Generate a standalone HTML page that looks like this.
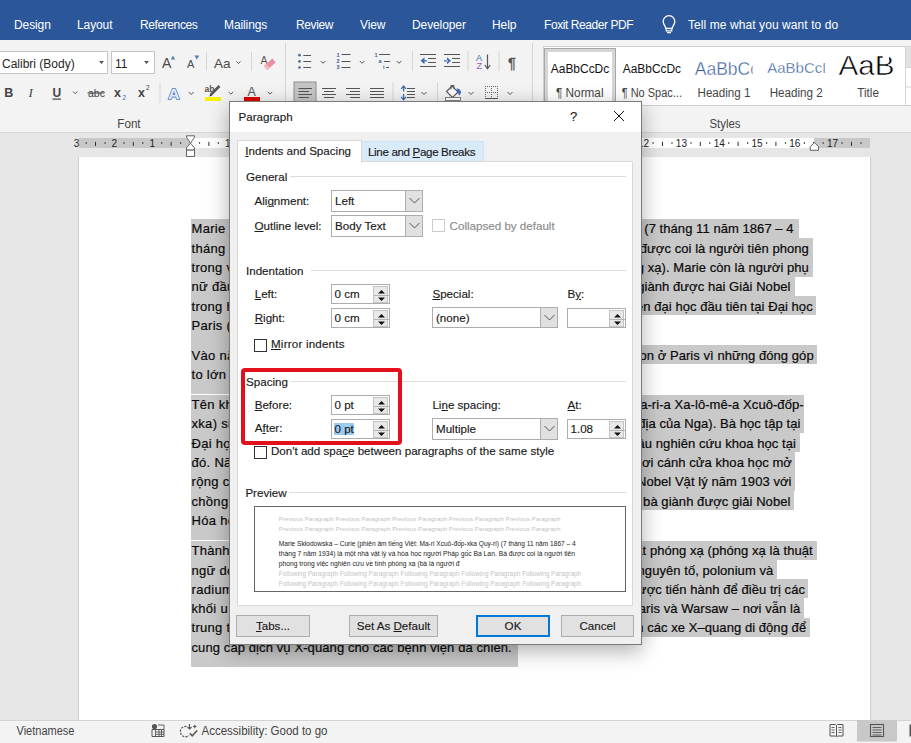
<!DOCTYPE html>
<html><head><meta charset="utf-8">
<style>
*{margin:0;padding:0;box-sizing:border-box}
html,body{width:911px;height:743px;overflow:hidden;background:#e6e6e6}
body{position:relative;font-family:"Liberation Sans",sans-serif;font-size:12px;color:#262626}
.a{position:absolute;white-space:nowrap}
#tabs{left:0;top:0;width:911px;height:40px;background:#2b579a}
#tabs .t{position:absolute;top:18.4px;color:#fff;font-size:12px;line-height:14px;letter-spacing:-0.1px}
#ribbon{left:0;top:40px;width:911px;height:93px;background:#f3f3f3;border-bottom:1px solid #d6d6d6}
.sep{position:absolute;width:1px;background:#d4d4d4}
.gsep{position:absolute;width:1px;background:#dadada}
.box{position:absolute;background:#fff;border:1px solid #c6c6c6}
.glab{position:absolute;top:77px;font-size:12px;color:#444;line-height:14px}
#page{left:79px;top:156.5px;width:791px;height:564px;background:#fff;box-shadow:-1px 0 0 #d0d0d0,1px 0 0 #d0d0d0}
#status{left:0;top:720px;width:911px;height:23px;background:#f3f3f3;border-top:1px solid #d4d4d4}
.hl{position:absolute;background:#c9c9c9}
.ptx{position:absolute;font-size:13px;color:#0a0a0a;-webkit-text-stroke:0.2px #0a0a0a;line-height:16px;white-space:nowrap;letter-spacing:0.06px}
#dlg{z-index:10;left:229px;top:101px;width:413px;height:544px;background:#f0f0f0;border:1px solid #7a7a7a;box-shadow:0 6px 20px rgba(0,0,0,0.32)}
.d{position:absolute;white-space:nowrap;font-size:11.6px;line-height:14px;color:#1a1a1a;letter-spacing:0px;-webkit-text-stroke:0.15px currentColor}
.u{text-decoration:underline;text-underline-offset:1px}
.combo{position:absolute;background:#fff;border:1px solid #adadad;height:21px}
.combo .btn{position:absolute;right:0;top:0;width:17px;height:19px;background:#e1e1e1;border-left:1px solid #adadad}
.spin{position:absolute;background:#fff;border:1px solid #adadad;height:20px}
.spin .sb{position:absolute;right:1px;top:1px;width:15px;height:16px;background:#e8e8e8;border:1px solid #c4c4c4}
.chk{position:absolute;width:13px;height:13px;background:#fff;border:1px solid #333}
.sect{position:absolute;height:1px;background:#dcdcdc}
.btnw{position:absolute;height:22px;background:#e1e1e1;border:1px solid #adadad;text-align:center;font-size:11.6px;line-height:20px;color:#1a1a1a;-webkit-text-stroke:0.15px #1a1a1a}
</style></head><body>

<!-- Tabs bar -->
<div id="tabs" class="a">
  <span class="t" style="left:14px">Design</span>
  <span class="t" style="left:77px">Layout</span>
  <span class="t" style="left:140px;letter-spacing:-0.4px">References</span>
  <span class="t" style="left:224px">Mailings</span>
  <span class="t" style="left:296px;letter-spacing:-0.4px">Review</span>
  <span class="t" style="left:360px">View</span>
  <span class="t" style="left:412px">Developer</span>
  <span class="t" style="left:492px">Help</span>
  <span class="t" style="left:544px;letter-spacing:-0.43px">Foxit Reader PDF</span>
  <span class="t" style="left:688px;letter-spacing:0.08px">Tell me what you want to do</span>
  <svg class="a" style="left:660px;top:14px" width="18" height="22"><path d="M5.8 14.3 C5.8 12.2 3.2 10.6 3.2 7.5 A5.8 5.8 0 0 1 14.8 7.5 C14.8 10.6 12.2 12.2 12.2 14.3 Z" fill="none" stroke="#fff" stroke-width="1.3"/><path d="M6.2 14.5 H11.8 V16.8 H6.2 Z" fill="none" stroke="#fff" stroke-width="1.2"/><path d="M7 18.6 H11" stroke="#fff" stroke-width="1.3"/></svg>
</div>

<!-- Ribbon -->
<div id="ribbon" class="a"></div>
<svg class="a" style="left:0;top:0" width="911" height="133" font-family="Liberation Sans">
 <!-- font name/size boxes -->
 <rect x="-1.5" y="51.5" width="109" height="22" fill="#fff" stroke="#c6c6c6"/>
 <rect x="111.5" y="51.5" width="43" height="22" fill="#fff" stroke="#c6c6c6"/>
 <text x="2" y="68" font-size="12" fill="#262626">Calibri (Body)</text>
 <text x="115" y="68" font-size="12" fill="#262626">11</text>
 <path d="M99 61 L104 61 L101.5 64 Z M144 61 L149 61 L146.5 64 Z" fill="#555"/>
 <!-- grow/shrink -->
 <text x="162" y="68" font-size="14" fill="#4a4a4a">A</text>
 <path d="M170.8 59.5 L173 55.5 L175.2 59.5 Z" fill="#5a7fb5"/>
 <text x="187" y="68" font-size="11" fill="#4a4a4a">A</text>
 <path d="M194.3 55.5 L199.3 55.5 L196.8 59.5 Z" fill="#5a7fb5"/>
 <rect x="206" y="52" width="1" height="19" fill="#d6d6d6"/>
 <text x="214" y="68" font-size="13.5" fill="#4a4a4a">Aa</text>
 <path d="M236.5 61.5 L238.5 63.5 L240.5 61.5" fill="none" stroke="#555"/>
 <rect x="251" y="52" width="1" height="19" fill="#d6d6d6"/>
 <text x="260.5" y="63.5" font-size="10.5" fill="#555">A</text>
 <path d="M263.85 66.1 L272.35 58.6 L275.65 62.4 L267.15 69.9 Z" fill="#ea8fa2"/>
 <path d="M263.85 66.1 L266.4 63.9 L269.7 67.6 L267.15 69.9 Z" fill="#f2b6c2"/>
 <!-- row 2 -->
 <text x="4.3" y="97" font-size="12.5" font-weight="bold" fill="#444">B</text>
 <text x="28.5" y="97" font-size="13" font-style="italic" font-family="Liberation Serif" fill="#444">I</text>
 <text x="52.5" y="97" font-size="12" fill="#444" font-weight="bold">U</text>
 <rect x="52.5" y="98.5" width="8.5" height="1.2" fill="#444"/>
 <path d="M73 91.5 L75.2 93.7 L77.4 91.5" fill="none" stroke="#555"/>
 <text x="88" y="97" font-size="10.5" fill="#444">abc</text>
 <rect x="87.5" y="92.5" width="17" height="1" fill="#444"/>
 <text x="114" y="97" font-size="12.5" font-weight="bold" fill="#444">x</text>
 <text x="122.5" y="99.5" font-size="6.5" fill="#3b6bb0">2</text>
 <text x="138" y="97" font-size="12.5" font-weight="bold" fill="#444">x</text>
 <text x="146" y="90" font-size="6.5" fill="#444">2</text>
 <rect x="159.5" y="83" width="1" height="20" fill="#d6d6d6"/>
 <text x="168.3" y="98.8" font-size="15.5" font-weight="bold" fill="#3f6fb8" stroke="#4f7fc4" stroke-width="1.6">A</text><text x="168.3" y="98.8" font-size="15.5" font-weight="bold" fill="#e6eef9">A</text>
 <path d="M188.7 92 L191.2 94.5 L193.7 92" fill="none" stroke="#555"/>
 <text x="204.5" y="92" font-size="8.5" font-weight="bold" fill="#555">ab</text>
 <path d="M210.5 95 L219.5 86" stroke="#555" stroke-width="2.6"/>
 <path d="M209 96.5 L210.5 94.5 L211.8 95.8 Z" fill="#333"/>
 <rect x="205" y="97" width="16" height="4" fill="#f5f500"/>
 <path d="M228.7 92 L230.9 94.2 L233.1 92" fill="none" stroke="#555"/>
 <text x="247.5" y="96" font-size="12.5" fill="#555">A</text>
 <rect x="244" y="97" width="16" height="4" fill="#e00000"/>
 <path d="M267.8 92 L270 94.2 L272.2 92" fill="none" stroke="#555"/>
 <!-- group labels/separators -->
 <text x="117.3" y="128.3" font-size="12" fill="#444" textLength="23.3" lengthAdjust="spacingAndGlyphs">Font</text>
 <text x="709.5" y="128.3" font-size="12" fill="#444" textLength="31" lengthAdjust="spacingAndGlyphs">Styles</text>
 <rect x="285" y="43" width="1" height="86" fill="#d4d4d4"/>
 <rect x="532" y="43" width="1" height="86" fill="#d4d4d4"/>
 <!-- paragraph row1 -->
 <g fill="#4d6a96"><circle cx="299.5" cy="55.2" r="1.35"/><circle cx="299.5" cy="61.4" r="1.35"/><circle cx="299.5" cy="67.5" r="1.35"/></g>
 <g fill="#555"><rect x="303.3" y="55" width="7.8" height="1"/><rect x="303.3" y="61" width="7.8" height="1"/><rect x="303.3" y="67" width="7.8" height="1"/></g>
 <path d="M320.8 61 L323.1 63.3 L325.4 61" fill="none" stroke="#555"/>
 <g font-size="5.5" fill="#3d5f95" font-weight="bold"><text x="336.5" y="57">1</text><text x="336.5" y="63.3">2</text><text x="336.5" y="69.4">3</text></g>
 <g fill="#555"><rect x="341.5" y="54" width="9" height="1"/><rect x="341.5" y="61" width="9" height="1"/><rect x="341.5" y="67" width="9" height="1"/></g>
 <path d="M359.8 61 L362.1 63.3 L364.4 61" fill="none" stroke="#555"/>
 <g font-size="5.5" fill="#3d5f95" font-weight="bold"><text x="374.5" y="57">1</text><text x="378.5" y="63.3">a</text><text x="383" y="69.4">i</text></g>
 <g fill="#555"><rect x="379" y="54" width="11" height="1"/><rect x="384" y="61" width="6" height="1"/><rect x="386" y="67" width="3" height="1"/></g>
 <path d="M396.8 61 L399.1 63.3 L401.4 61" fill="none" stroke="#555"/>
 <rect x="412" y="51" width="1" height="20" fill="#d6d6d6"/>
 <g fill="#555"><rect x="420" y="54" width="16" height="1"/><rect x="428" y="58" width="8" height="1"/><rect x="428" y="62" width="8" height="1"/><rect x="420" y="66" width="16" height="1"/>
 <rect x="444" y="54" width="16" height="1"/><rect x="452" y="58" width="8" height="1"/><rect x="452" y="62" width="8" height="1"/><rect x="444" y="66" width="16" height="1"/></g>
 <path d="M420.5 60.8 L424.5 57.3 L424.5 64.3 Z M423 60.2 L427 60.2 L427 61.4 L423 61.4 Z" fill="#3e6db5"/>
 <path d="M451 60.8 L447 57.3 L447 64.3 Z M444 60.2 L448 60.2 L448 61.4 L444 61.4 Z" fill="#3e6db5"/>
 <rect x="467.5" y="51" width="1" height="20" fill="#d6d6d6"/>
 <text x="476" y="61.3" font-size="9.2" fill="#3e6db5">A</text>
 <text x="476.5" y="69" font-size="9.2" fill="#8c6bb1">Z</text>
 <path d="M487.5 54.5 L487.5 68" stroke="#555" stroke-width="1.2"/><path d="M484.8 65 L487.5 68.8 L490.2 65" fill="none" stroke="#555" stroke-width="1.2"/>
 <rect x="498.5" y="51" width="1" height="20" fill="#d6d6d6"/>
 <text x="508" y="68" font-size="14.5" fill="#555" stroke="#555" stroke-width="0.3">¶</text>
 <!-- paragraph row2 -->
 <rect x="294" y="82" width="22" height="22" fill="#c5c5c5" stroke="#8d8d8d"/>
 <g fill="#555">
  <rect x="298.5" y="88" width="13.5" height="1"/><rect x="298.5" y="91" width="10.5" height="1"/><rect x="298.5" y="94" width="13.5" height="1"/><rect x="298.5" y="97" width="10.5" height="1"/>
  <rect x="322" y="88" width="14" height="1"/><rect x="324" y="91" width="10" height="1"/><rect x="322" y="94" width="14" height="1"/><rect x="324" y="97" width="10" height="1"/>
  <rect x="346" y="88" width="14" height="1"/><rect x="350" y="91" width="10" height="1"/><rect x="346" y="94" width="14" height="1"/><rect x="350" y="97" width="10" height="1"/>
  <rect x="370" y="88" width="14" height="1"/><rect x="370" y="91" width="14" height="1"/><rect x="370" y="94" width="14" height="1"/><rect x="370" y="97" width="14" height="1"/>
 </g>
 <rect x="392.5" y="82" width="1" height="20" fill="#d6d6d6"/>
 <path d="M403.6 86.5 V91.5 M403.6 94 V99.3" stroke="#3e6db5" stroke-width="1.3"/>
 <path d="M401.2 88.8 L403.6 86 L406 88.8 M401.2 97 L403.6 99.8 L406 97" fill="none" stroke="#3e6db5" stroke-width="1.3"/>
 <g fill="#555"><rect x="407" y="88" width="8" height="1"/><rect x="407" y="91" width="8" height="1"/><rect x="407" y="94" width="8" height="1"/><rect x="407" y="97" width="8" height="1"/></g>
 <path d="M421.5 92 L424 94.5 L426.5 92" fill="none" stroke="#555"/>
 <rect x="437" y="82" width="1" height="20" fill="#d6d6d6"/>
 <path d="M446.5 91.5 L452 86 L458 92 L452.5 97.5 Z" fill="#fff" stroke="#555" stroke-width="1.1"/>
 <path d="M451 89.5 V85.5 H454 V89" fill="none" stroke="#555" stroke-width="1"/>
 <path d="M456.5 88.5 C459.5 88.5 461 90.5 461 92.5 L459.5 95.5 L457 92 Z" fill="#3e6db5"/>
 <rect x="445.5" y="97.5" width="15" height="3" fill="#fff" stroke="#777" stroke-width="0.9"/>
 <path d="M468.5 92 L471 94.5 L473.5 92" fill="none" stroke="#555"/>
 <path d="M485 86h1v1h-1zM485 88h1v1h-1zM485 90h1v1h-1zM485 92h1v1h-1zM485 94h1v1h-1zM485 96h1v1h-1zM487 86h1v1h-1zM487 92h1v1h-1zM489 86h1v1h-1zM489 92h1v1h-1zM491 86h1v1h-1zM491 88h1v1h-1zM491 90h1v1h-1zM491 92h1v1h-1zM491 94h1v1h-1zM491 96h1v1h-1zM493 86h1v1h-1zM493 92h1v1h-1zM495 86h1v1h-1zM495 92h1v1h-1zM497 86h1v1h-1zM497 88h1v1h-1zM497 90h1v1h-1zM497 92h1v1h-1zM497 94h1v1h-1zM497 96h1v1h-1z" fill="#666"/>
 <rect x="485" y="98" width="13" height="1" fill="#555"/>
 <path d="M507.5 92 L510 94.5 L512.5 92" fill="none" stroke="#555"/>
 <!-- styles gallery -->
 <rect x="543.5" y="46.5" width="368" height="59" fill="#fff" stroke="#cfcfcf"/>
 <rect x="544" y="48" width="72" height="58" fill="#a8a8a8"/><rect x="545" y="49" width="70" height="57" fill="#d6d6d6"/><rect x="548" y="52" width="64" height="54" fill="#fff"/>
 <text x="550.8" y="73" font-size="12" fill="#111" textLength="58.4" lengthAdjust="spacingAndGlyphs">AaBbCcDc</text>
 <text x="556" y="97" font-size="12" fill="#444" textLength="47.5" lengthAdjust="spacingAndGlyphs">¶ Normal</text>
 <text x="622.8" y="73" font-size="12" fill="#111" textLength="58.2" lengthAdjust="spacingAndGlyphs">AaBbCcDc</text>
 <text x="621.7" y="97" font-size="12" fill="#444" textLength="60.3" lengthAdjust="spacingAndGlyphs">¶ No Spac...</text>
 <svg x="690" y="48" width="62.5" height="40"><text x="4.8" y="27" font-size="17.5" fill="#3b5f9e" stroke="#fff" stroke-width="0.35">AaBbCc</text></svg>
 <text x="697.5" y="97" font-size="12" fill="#444" textLength="53" lengthAdjust="spacingAndGlyphs">Heading 1</text>
 <svg x="760" y="48" width="64.8" height="40"><text x="7.2" y="25.1" font-size="15" fill="#3b5f9e" stroke="#fff" stroke-width="0.3">AaBbCcDd</text></svg>
 <text x="769.7" y="97" font-size="12" fill="#444" textLength="53" lengthAdjust="spacingAndGlyphs">Heading 2</text>
 <text x="838.5" y="74.8" font-size="28" fill="#000" stroke="#fff" stroke-width="0.55" textLength="56" lengthAdjust="spacingAndGlyphs">AaB</text><rect x="882.6" y="53" width="6.5" height="7.6" fill="#fff"/>
 <text x="857.3" y="97" font-size="12" fill="#444" textLength="21.7" lengthAdjust="spacingAndGlyphs">Title</text>
 <rect x="905" y="46.5" width="6" height="21" fill="#e1e1e1"/>
 <rect x="905" y="46.5" width="1" height="59" fill="#d5d5d5"/>
 <rect x="905" y="86.5" width="6" height="1" fill="#d5d5d5"/>
 <rect x="905" y="67" width="6" height="1" fill="#d5d5d5"/>
</svg>
<!-- ruler -->
<svg class="a" style="left:0;top:133px;z-index:2" width="911" height="24" font-family="Liberation Sans">
 <rect x="79" y="5" width="791" height="10" fill="#fff"/>
 <rect x="79" y="5" width="111" height="10" fill="#c8c8c8"/>
 <rect x="814" y="5" width="56" height="10" fill="#c8c8c8"/>
 <text x="76.6" y="13.6" font-size="10" fill="#222" text-anchor="middle">3</text>
 <rect x="85.6" y="9.3" width="1.2" height="1.4" fill="#222"/>
 <rect x="95.0" y="8.8" width="1" height="4.2" fill="#333"/>
 <rect x="104.5" y="9.3" width="1.2" height="1.4" fill="#222"/>
 <text x="114.4" y="13.6" font-size="10" fill="#222" text-anchor="middle">2</text>
 <rect x="123.4" y="9.3" width="1.2" height="1.4" fill="#222"/>
 <rect x="132.8" y="8.8" width="1" height="4.2" fill="#333"/>
 <rect x="142.2" y="9.3" width="1.2" height="1.4" fill="#222"/>
 <text x="152.2" y="13.6" font-size="10" fill="#222" text-anchor="middle">1</text>
 <rect x="161.1" y="9.3" width="1.2" height="1.4" fill="#222"/>
 <rect x="170.6" y="8.8" width="1" height="4.2" fill="#333"/>
 <rect x="180.0" y="9.3" width="1.2" height="1.4" fill="#222"/>
 <rect x="198.9" y="9.3" width="1.2" height="1.4" fill="#222"/>
 <rect x="208.4" y="8.8" width="1" height="4.2" fill="#333"/>
 <rect x="217.8" y="9.3" width="1.2" height="1.4" fill="#222"/>
 <text x="227.8" y="13.6" font-size="10" fill="#222" text-anchor="middle">1</text>
 <rect x="236.8" y="9.3" width="1.2" height="1.4" fill="#222"/>
 <rect x="246.2" y="8.8" width="1" height="4.2" fill="#333"/>
 <rect x="255.7" y="9.3" width="1.2" height="1.4" fill="#222"/>
 <text x="265.6" y="13.6" font-size="10" fill="#222" text-anchor="middle">2</text>
 <rect x="274.6" y="9.3" width="1.2" height="1.4" fill="#222"/>
 <rect x="284.0" y="8.8" width="1" height="4.2" fill="#333"/>
 <rect x="293.5" y="9.3" width="1.2" height="1.4" fill="#222"/>
 <text x="303.4" y="13.6" font-size="10" fill="#222" text-anchor="middle">3</text>
 <rect x="312.3" y="9.3" width="1.2" height="1.4" fill="#222"/>
 <rect x="321.8" y="8.8" width="1" height="4.2" fill="#333"/>
 <rect x="331.2" y="9.3" width="1.2" height="1.4" fill="#222"/>
 <text x="341.2" y="13.6" font-size="10" fill="#222" text-anchor="middle">4</text>
 <rect x="350.1" y="9.3" width="1.2" height="1.4" fill="#222"/>
 <rect x="359.6" y="8.8" width="1" height="4.2" fill="#333"/>
 <rect x="369.1" y="9.3" width="1.2" height="1.4" fill="#222"/>
 <text x="379.0" y="13.6" font-size="10" fill="#222" text-anchor="middle">5</text>
 <rect x="387.9" y="9.3" width="1.2" height="1.4" fill="#222"/>
 <rect x="397.4" y="8.8" width="1" height="4.2" fill="#333"/>
 <rect x="406.9" y="9.3" width="1.2" height="1.4" fill="#222"/>
 <text x="416.8" y="13.6" font-size="10" fill="#222" text-anchor="middle">6</text>
 <rect x="425.7" y="9.3" width="1.2" height="1.4" fill="#222"/>
 <rect x="435.2" y="8.8" width="1" height="4.2" fill="#333"/>
 <rect x="444.6" y="9.3" width="1.2" height="1.4" fill="#222"/>
 <text x="454.6" y="13.6" font-size="10" fill="#222" text-anchor="middle">7</text>
 <rect x="463.5" y="9.3" width="1.2" height="1.4" fill="#222"/>
 <rect x="473.0" y="8.8" width="1" height="4.2" fill="#333"/>
 <rect x="482.4" y="9.3" width="1.2" height="1.4" fill="#222"/>
 <text x="492.4" y="13.6" font-size="10" fill="#222" text-anchor="middle">8</text>
 <rect x="501.3" y="9.3" width="1.2" height="1.4" fill="#222"/>
 <rect x="510.8" y="8.8" width="1" height="4.2" fill="#333"/>
 <rect x="520.2" y="9.3" width="1.2" height="1.4" fill="#222"/>
 <text x="530.2" y="13.6" font-size="10" fill="#222" text-anchor="middle">9</text>
 <rect x="539.2" y="9.3" width="1.2" height="1.4" fill="#222"/>
 <rect x="548.6" y="8.8" width="1" height="4.2" fill="#333"/>
 <rect x="558.1" y="9.3" width="1.2" height="1.4" fill="#222"/>
 <text x="568.0" y="13.6" font-size="10" fill="#222" text-anchor="middle">10</text>
 <rect x="577.0" y="9.3" width="1.2" height="1.4" fill="#222"/>
 <rect x="586.4" y="8.8" width="1" height="4.2" fill="#333"/>
 <rect x="595.9" y="9.3" width="1.2" height="1.4" fill="#222"/>
 <text x="605.8" y="13.6" font-size="10" fill="#222" text-anchor="middle">11</text>
 <rect x="614.8" y="9.3" width="1.2" height="1.4" fill="#222"/>
 <rect x="624.2" y="8.8" width="1" height="4.2" fill="#333"/>
 <rect x="633.6" y="9.3" width="1.2" height="1.4" fill="#222"/>
 <text x="643.6" y="13.6" font-size="10" fill="#222" text-anchor="middle">12</text>
 <rect x="652.5" y="9.3" width="1.2" height="1.4" fill="#222"/>
 <rect x="662.0" y="8.8" width="1" height="4.2" fill="#333"/>
 <rect x="671.4" y="9.3" width="1.2" height="1.4" fill="#222"/>
 <text x="681.4" y="13.6" font-size="10" fill="#222" text-anchor="middle">13</text>
 <rect x="690.4" y="9.3" width="1.2" height="1.4" fill="#222"/>
 <rect x="699.8" y="8.8" width="1" height="4.2" fill="#333"/>
 <rect x="709.2" y="9.3" width="1.2" height="1.4" fill="#222"/>
 <text x="719.2" y="13.6" font-size="10" fill="#222" text-anchor="middle">14</text>
 <rect x="728.1" y="9.3" width="1.2" height="1.4" fill="#222"/>
 <rect x="737.6" y="8.8" width="1" height="4.2" fill="#333"/>
 <rect x="747.0" y="9.3" width="1.2" height="1.4" fill="#222"/>
 <text x="757.0" y="13.6" font-size="10" fill="#222" text-anchor="middle">15</text>
 <rect x="766.0" y="9.3" width="1.2" height="1.4" fill="#222"/>
 <rect x="775.4" y="8.8" width="1" height="4.2" fill="#333"/>
 <rect x="784.9" y="9.3" width="1.2" height="1.4" fill="#222"/>
 <text x="794.8" y="13.6" font-size="10" fill="#222" text-anchor="middle">16</text>
 <rect x="803.8" y="9.3" width="1.2" height="1.4" fill="#222"/>
 <rect x="813.2" y="8.8" width="1" height="4.2" fill="#333"/>
 <rect x="822.6" y="9.3" width="1.2" height="1.4" fill="#222"/>
 <text x="832.6" y="13.6" font-size="10" fill="#222" text-anchor="middle">17</text>
 <rect x="841.5" y="9.3" width="1.2" height="1.4" fill="#222"/>
 <rect x="851.0" y="8.8" width="1" height="4.2" fill="#333"/>
 <rect x="860.4" y="9.3" width="1.2" height="1.4" fill="#222"/>
 <path d="M186.5 2.8 H194.5 V4.2 L190.5 10.2 L186.5 4.2 Z" fill="#fff" stroke="#555" stroke-width="0.9"/>
 <path d="M190.5 10.2 L194.5 14.8 V17.1 H186.5 V14.8 Z" fill="#fff" stroke="#555" stroke-width="0.9"/>
 <rect x="186.5" y="17.1" width="8" height="6.3" fill="#fff" stroke="#555" stroke-width="0.9"/>
 <path d="M814.4 9.5 L818.5 13.6 V17.3 H810.3 V13.6 Z" fill="#fff" stroke="#555" stroke-width="0.9"/>
</svg>

<!-- page -->
<div id="page" class="a"></div>
<div class="hl" style="left:191px;top:218.80px;width:608.0px;height:19.27px"></div>
<div class="hl" style="left:191px;top:238.07px;width:621.7px;height:19.27px"></div>
<div class="hl" style="left:191px;top:257.34px;width:621.7px;height:19.27px"></div>
<div class="hl" style="left:191px;top:276.61px;width:603.5px;height:19.27px"></div>
<div class="hl" style="left:191px;top:295.88px;width:624.8px;height:19.27px"></div>
<div class="hl" style="left:191px;top:315.15px;width:369.0px;height:29.87px"></div>
<div class="hl" style="left:191px;top:345.00px;width:625.8px;height:19.27px"></div>
<div class="hl" style="left:191px;top:364.27px;width:329.0px;height:29.87px"></div>
<div class="hl" style="left:191px;top:394.50px;width:613.2px;height:19.27px"></div>
<div class="hl" style="left:191px;top:413.77px;width:613.2px;height:19.27px"></div>
<div class="hl" style="left:191px;top:433.04px;width:609.0px;height:19.27px"></div>
<div class="hl" style="left:191px;top:452.31px;width:604.3px;height:19.27px"></div>
<div class="hl" style="left:191px;top:471.58px;width:604.3px;height:19.27px"></div>
<div class="hl" style="left:191px;top:490.85px;width:603.0px;height:19.27px"></div>
<div class="hl" style="left:191px;top:510.12px;width:409.0px;height:29.87px"></div>
<div class="hl" style="left:191px;top:540.60px;width:625.7px;height:19.27px"></div>
<div class="hl" style="left:191px;top:559.87px;width:585.7px;height:19.27px"></div>
<div class="hl" style="left:191px;top:579.14px;width:616.6px;height:19.27px"></div>
<div class="hl" style="left:191px;top:598.41px;width:613.2px;height:19.27px"></div>
<div class="hl" style="left:191px;top:617.68px;width:619.3px;height:19.27px"></div>
<div class="hl" style="left:191px;top:636.95px;width:326.5px;height:29.87px"></div>
<span class="ptx" style="letter-spacing:0.3px;left:191.5px;top:221.45px">Marie Skłodowska – Curie (phiên âm tiếng Việt:</span>
<span class="ptx" style="right:117.4px;top:221.45px">Xcuô-đốp-xka Quy-ri) (7 tháng 11 năm 1867 – 4</span>
<span class="ptx" style="letter-spacing:0.3px;left:191.5px;top:240.72px">tháng 7 năm 1934) là một nhà vật lý và hóa học</span>
<span class="ptx" style="right:102.1px;top:240.72px">Bà được coi là người tiên phong</span>
<span class="ptx" style="letter-spacing:0.3px;left:191.5px;top:259.99px">trong việc nghiên cứu về tính phóng xạ (bà</span>
<span class="ptx" style="right:102.1px;top:259.99px">thuật ngữ phóng xạ). Marie còn là người phụ</span>
<span class="ptx" style="letter-spacing:0.3px;left:191.5px;top:279.26px">nữ đầu tiên nhận giải Nobel và là người duy</span>
<span class="ptx" style="right:120.6px;top:279.26px">người duy nhất giành được hai Giải Nobel</span>
<span class="ptx" style="letter-spacing:0.3px;left:191.5px;top:298.53px">trong hai lĩnh vực khác nhau, và là nữ giáo sư</span>
<span class="ptx" style="right:98.3px;top:298.53px">nữ giáo sư/ giảng viên đại học đầu tiên tại Đại học</span>
<span class="ptx" style="letter-spacing:0.3px;left:191.5px;top:317.80px">Paris (Sorbonne).</span>
<span class="ptx" style="letter-spacing:0.3px;left:191.5px;top:347.65px">Vào năm 1995, bà được an táng ở điện Panthéon</span>
<span class="ptx" style="right:97.3px;top:347.65px">an táng ở điện Panthéon ở Paris vì những đóng góp</span>
<span class="ptx" style="letter-spacing:0.3px;left:191.5px;top:366.92px">to lớn của bà cho khoa học.</span>
<span class="ptx" style="letter-spacing:0.3px;left:191.5px;top:397.15px">Tên khai sinh của bà là Ma-ri-a Xa-lô-mê-a</span>
<span class="ptx" style="right:107.4px;top:397.15px">Tên khai sinh của bà là Ma-ri-a Xa-lô-mê-a Xcuô-đốp-</span>
<span class="ptx" style="letter-spacing:0.3px;left:191.5px;top:416.42px">xka) sinh ra tại Vác-sa-va (thuộc địa</span>
<span class="ptx" style="right:110.6px;top:416.42px">Vác-sa-va (thuộc địa của Nga). Bà học tập tại</span>
<span class="ptx" style="letter-spacing:0.3px;left:191.5px;top:435.69px">Đại học Paris và bắt đầu nghiên cứu</span>
<span class="ptx" style="right:115.0px;top:435.69px">và bắt đầu nghiên cứu khoa học tại</span>
<span class="ptx" style="letter-spacing:0.3px;left:191.5px;top:454.96px">đó. Năm 1903, bà mở ra cho phụ nữ</span>
<span class="ptx" style="right:119.1px;top:454.96px">mở ra cho phụ nữ nơi cánh cửa khoa học mở</span>
<span class="ptx" style="letter-spacing:0.3px;left:191.5px;top:474.23px">rộng cửa khi bà đoạt giải Nobel Vật lý</span>
<span class="ptx" style="right:119.5px;top:474.23px">đoạt giải Nobel Vật lý năm 1903 với</span>
<span class="ptx" style="letter-spacing:0.3px;left:191.5px;top:493.50px">chồng Pierre Curie. Năm 1911, bà</span>
<span class="ptx" style="right:120.6px;top:493.50px">Năm 1911, bà giành được giải Nobel</span>
<span class="ptx" style="letter-spacing:0.3px;left:191.5px;top:512.77px">Hóa học.</span>
<span class="ptx" style="letter-spacing:0.3px;left:191.5px;top:543.25px">Thành tựu của bà gồm phát hiện ra tính chất</span>
<span class="ptx" style="right:98.3px;top:543.25px">tính chất phóng xạ (phóng xạ là thuật</span>
<span class="ptx" style="letter-spacing:0.3px;left:191.5px;top:562.52px">ngữ do bà đặt ra), kỹ thuật phân lập</span>
<span class="ptx" style="right:137.7px;top:562.52px">khám phá ra hai nguyên tố, polonium và</span>
<span class="ptx" style="letter-spacing:0.3px;left:191.5px;top:581.79px">radium. Dưới sự chỉ đạo của bà, những</span>
<span class="ptx" style="right:106.0px;top:581.79px">nghiên cứu đầu tiên được tiến hành để điều trị các</span>
<span class="ptx" style="letter-spacing:0.3px;left:191.5px;top:601.06px">khối u bằng phóng xạ. Bà sáng lập Viện</span>
<span class="ptx" style="right:110.8px;top:601.06px">Viện Curie tại Paris và Warsaw – nơi vẫn là</span>
<span class="ptx" style="letter-spacing:0.3px;left:191.5px;top:620.33px">trung tâm nghiên cứu y khoa. Bà phát triển</span>
<span class="ptx" style="right:104.8px;top:620.33px">phát triển các xe X–quang di động để</span>
<span class="ptx" style="letter-spacing:0.1px;left:191.5px;top:639.60px">cung cấp dịch vụ X-quang cho các bệnh viện dã chiến.</span>

<!-- status bar -->
<div id="status" class="a"></div>
<svg class="a" style="left:0;top:719px" width="911" height="24" font-family="Liberation Sans">
 <text x="16.5" y="15.8" font-size="12" fill="#444" textLength="58" lengthAdjust="spacingAndGlyphs">Vietnamese</text>
 <circle cx="154.5" cy="7.5" r="2.6" fill="#555"/>
 <path d="M152 10.5 H164 V17.5 H152 Z" fill="none" stroke="#555" stroke-width="1"/>
 <path d="M158 6 H164 V10.5 M156 13 H164 M156 15.3 H164 M155.5 10.5 V17.5 M159 10.5 V17.5 M161.5 10.5 V17.5" fill="none" stroke="#555" stroke-width="0.9"/>
 <path d="M186.5 7.5 A5.2 5.2 0 1 0 189 16.5" fill="none" stroke="#555" stroke-width="1.2" stroke-dasharray="2.2 1.2"/>
 <path d="M189.5 5 V10 M187.5 8 L189.5 10 L191.5 8 M193 7.5 H196.5 M194.75 5.7 V9.3" fill="none" stroke="#555" stroke-width="1.1"/>
 <path d="M189.8 14.3 L192.2 16.8 L197.2 11.5" fill="none" stroke="#555" stroke-width="1.5"/>
 <text x="201.5" y="15.8" font-size="12" fill="#444" textLength="126" lengthAdjust="spacingAndGlyphs">Accessibility: Good to go</text>
 <path d="M830 5.5 H835.5 L836.5 6.5 L837.5 5.5 H843 V17 H837.5 L836.5 18 L835.5 17 H830 Z M836.5 6.5 V17" fill="none" stroke="#555" stroke-width="1"/>
 <path d="M831.5 8.5 H834.5 M831.5 11 H834.5 M831.5 13.5 H834.5 M838.5 8.5 H841.5 M838.5 11 H841.5 M838.5 13.5 H841.5" stroke="#555" stroke-width="0.9"/>
 <rect x="857" y="1" width="40" height="21.5" fill="#c8c8c8"/>
 <rect x="870.5" y="5.5" width="13" height="12" fill="none" stroke="#555" stroke-width="1.1"/>
 <path d="M872.5 8.5 H881.5 M872.5 11 H881.5 M872.5 13.5 H881.5 M872.5 16 H881.5" stroke="#555" stroke-width="0.9"/>
 <rect x="909.5" y="5.5" width="2" height="12" fill="#555"/>
</svg>

<!-- Dialog -->
<div id="dlg" class="a">
<div class="a" style="left:0;top:0;width:411px;height:30px;background:#fff"></div>
<span class="d" style="left:8.5px;top:8.2px;">Paragraph</span>
<span class="d" style="left:340px;top:8.0px;font-size:13px">?</span>
<svg class="a" style="left:382.5px;top:8.3px" width="12" height="12"><path d="M1 1 L11 11 M11 1 L1 11" stroke="#111" stroke-width="1"/></svg>
<div class="a" style="left:7px;top:58.5px;width:396px;height:445px;background:#fff;border:1px solid #d9d9d9"></div>
<div class="a" style="left:131px;top:39px;width:123px;height:20px;background:#d9eaf9;border:1px solid #d4e3f0;border-bottom:none"></div>
<div class="a" style="left:7px;top:37.5px;width:125px;height:23px;background:#fff;border:1px solid #d9d9d9;border-bottom:none"></div>
<span class="d" style="left:15.3px;top:42.2px;"><span class="u">I</span>ndents and Spacing</span>
<span class="d" style="left:138px;top:42.8px;letter-spacing:-0.35px">Line and <span class="u">P</span>age Breaks</span>
<span class="d" style="left:16px;top:68.0px;">General</span>
<div class="sect" style="left:60px;top:74px;width:336px"></div>
<span class="d" style="left:24.5px;top:92.4px;">Ali<span class="u">g</span>nment:</span>
<div class="combo" style="left:101px;top:88px;width:92px;height:22px"><div class="btn" style="height:20px"><svg width="17" height="19" style="position:absolute;left:0;top:0"><path d="M3.5 7 L8.5 12 L13.5 7" fill="none" stroke="#555" stroke-width="1"/></svg></div></div>
<span class="d" style="left:105px;top:92.1px;">Left</span>
<span class="d" style="left:24.5px;top:117.1px;"><span class="u">O</span>utline level:</span>
<div class="combo" style="left:101px;top:113px;width:92px;height:22px"><div class="btn" style="height:20px"><svg width="17" height="19" style="position:absolute;left:0;top:0"><path d="M3.5 7 L8.5 12 L13.5 7" fill="none" stroke="#555" stroke-width="1"/></svg></div></div>
<span class="d" style="left:105px;top:117.1px;">Body Text</span>
<div class="chk" style="left:202px;top:117px;border-color:#cbcbcb"></div>
<span class="d" style="left:219.6px;top:116.8px;color:#8a8a8a">Collapsed by default</span>
<span class="d" style="left:16px;top:162.0px;">Indentation</span>
<div class="sect" style="left:81px;top:168px;width:315px"></div>
<span class="d" style="left:24.7px;top:184.6px;"><span class="u">L</span>eft:</span>
<div class="spin" style="left:101px;top:182px;width:59px;height:20px"><div class="sb" style="height:17px"><svg width="15" height="17" style="position:absolute;left:0;top:0"><path d="M4 6.5 L7.5 3 L11 6.5Z M4 10.5 L7.5 14 L11 10.5Z" fill="#111"/><rect x="0" y="8" width="15" height="1" fill="#b4b4b4"/></svg></div></div>
<span class="d" style="left:104.5px;top:185.1px;">0 cm</span>
<span class="d" style="left:24.7px;top:208.8px;"><span class="u">R</span>ight:</span>
<div class="spin" style="left:101px;top:206px;width:59px;height:20px"><div class="sb" style="height:17px"><svg width="15" height="17" style="position:absolute;left:0;top:0"><path d="M4 6.5 L7.5 3 L11 6.5Z M4 10.5 L7.5 14 L11 10.5Z" fill="#111"/><rect x="0" y="8" width="15" height="1" fill="#b4b4b4"/></svg></div></div>
<span class="d" style="left:104.5px;top:209.1px;">0 cm</span>
<span class="d" style="left:202.4px;top:185.2px;"><span class="u">S</span>pecial:</span>
<div class="combo" style="left:202px;top:205px;width:126px;height:21px"><div class="btn" style="height:19px"><svg width="17" height="19" style="position:absolute;left:0;top:0"><path d="M3.5 7 L8.5 12 L13.5 7" fill="none" stroke="#555" stroke-width="1"/></svg></div></div>
<span class="d" style="left:206px;top:209.1px;">(none)</span>
<span class="d" style="left:337.5px;top:185.2px;">B<span class="u">y</span>:</span>
<div class="spin" style="left:337px;top:206px;width:59px;height:20px"><div class="sb" style="height:17px"><svg width="15" height="17" style="position:absolute;left:0;top:0"><path d="M4 6.5 L7.5 3 L11 6.5Z M4 10.5 L7.5 14 L11 10.5Z" fill="#111"/><rect x="0" y="8" width="15" height="1" fill="#b4b4b4"/></svg></div></div>
<div class="chk" style="left:24px;top:237px;border-color:#333"></div>
<span class="d" style="left:41px;top:235.1px;letter-spacing:0.2px"><span class="u">M</span>irror indents</span>
<span class="d" style="left:16px;top:273.1px;">Spacing</span>
<div class="sect" style="left:61px;top:279px;width:335px"></div>
<span class="d" style="left:24.7px;top:295.5px;"><span class="u">B</span>efore:</span>
<div class="spin" style="left:101px;top:293px;width:59px;height:20px"><div class="sb" style="height:17px"><svg width="15" height="17" style="position:absolute;left:0;top:0"><path d="M4 6.5 L7.5 3 L11 6.5Z M4 10.5 L7.5 14 L11 10.5Z" fill="#111"/><rect x="0" y="8" width="15" height="1" fill="#b4b4b4"/></svg></div></div>
<span class="d" style="left:104.5px;top:296.1px;">0 pt</span>
<span class="d" style="left:24.7px;top:319.2px;">A<span class="u">f</span>ter:</span>
<div class="spin" style="left:101px;top:317px;width:59px;height:20px"><div class="sb" style="height:17px"><svg width="15" height="17" style="position:absolute;left:0;top:0"><path d="M4 6.5 L7.5 3 L11 6.5Z M4 10.5 L7.5 14 L11 10.5Z" fill="#111"/><rect x="0" y="8" width="15" height="1" fill="#b4b4b4"/></svg></div></div>
<div class="a" style="left:104px;top:320.5px;width:20px;height:12px;background:#9bcbf3"></div>
<span class="d" style="left:104.5px;top:320.1px;">0 pt</span>
<span class="d" style="left:202.4px;top:295.5px;">Li<span class="u">n</span>e spacing:</span>
<div class="combo" style="left:202px;top:316px;width:126px;height:22px"><div class="btn" style="height:20px"><svg width="17" height="19" style="position:absolute;left:0;top:0"><path d="M3.5 7 L8.5 12 L13.5 7" fill="none" stroke="#555" stroke-width="1"/></svg></div></div>
<span class="d" style="left:206px;top:320.1px;">Multiple</span>
<span class="d" style="left:337.5px;top:295.5px;"><span class="u">A</span>t:</span>
<div class="spin" style="left:337px;top:317px;width:59px;height:20px"><div class="sb" style="height:17px"><svg width="15" height="17" style="position:absolute;left:0;top:0"><path d="M4 6.5 L7.5 3 L11 6.5Z M4 10.5 L7.5 14 L11 10.5Z" fill="#111"/><rect x="0" y="8" width="15" height="1" fill="#b4b4b4"/></svg></div></div>
<span class="d" style="left:340.5px;top:320.1px;">1.08</span>
<div class="chk" style="left:24px;top:344px;border-color:#333"></div>
<span class="d" style="left:41px;top:341.6px;">Don't add spa<span class="u">c</span>e between paragraphs of the same style</span>
<span class="d" style="left:15.4px;top:383.8px;">Preview</span>
<div class="sect" style="left:59px;top:390px;width:337px"></div>
<div class="a" style="left:24px;top:404px;width:372px;height:86px;background:#fff;border:1px solid #666"></div>
<span class="a" style="left:48.8px;top:412.1px;font-size:6.23px;line-height:10px;color:#c3c3c3">Previous Paragraph Previous Paragraph Previous Paragraph Previous Paragraph Previous Paragraph</span>
<span class="a" style="left:48.8px;top:421.9px;font-size:6.23px;line-height:10px;color:#c3c3c3">Previous Paragraph Previous Paragraph Previous Paragraph Previous Paragraph Previous Paragraph</span>
<span class="a" style="left:48.8px;top:437.0px;font-size:6.60px;line-height:10px;color:#222">Marie Skłodowska – Curie (phiên âm tiếng Việt: Ma-ri Xcuô-đốp-xka Quy-ri) (7 tháng 11 năm 1867 – 4</span>
<span class="a" style="left:48.8px;top:447.2px;font-size:6.76px;line-height:10px;color:#222">tháng 7 năm 1934) là một nhà vật lý và hóa học người Pháp gốc Ba Lan. Bà được coi là người tiên</span>
<span class="a" style="left:48.8px;top:457.2px;font-size:6.72px;line-height:10px;color:#222">phong trong việc nghiên cứu về tính phóng xạ  (bà là người đ</span>
<span class="a" style="left:48.8px;top:466.9px;font-size:6.45px;line-height:10px;color:#c3c3c3">Following Paragraph Following Paragraph Following Paragraph Following Paragraph Following Paragraph</span>
<span class="a" style="left:48.8px;top:477.0px;font-size:6.45px;line-height:10px;color:#c3c3c3">Following Paragraph Following Paragraph Following Paragraph Following Paragraph Following Paragraph</span>
<div class="a" style="left:10.5px;top:265.5px;width:161px;height:77px;border:4px solid #e3101b;border-radius:4px"></div>
<div class="btnw" style="left:6px;top:513px;width:74px;"><span class="u">T</span>abs...</div>
<div class="btnw" style="left:119px;top:513px;width:89px;">Set As <span class="u">D</span>efault</div>
<div class="btnw" style="left:246px;top:513px;width:74px;border:2px solid #0078d7;line-height:18px;">OK</div>
<div class="btnw" style="left:331px;top:513px;width:73px;">Cancel</div>
</div>

</body></html>
